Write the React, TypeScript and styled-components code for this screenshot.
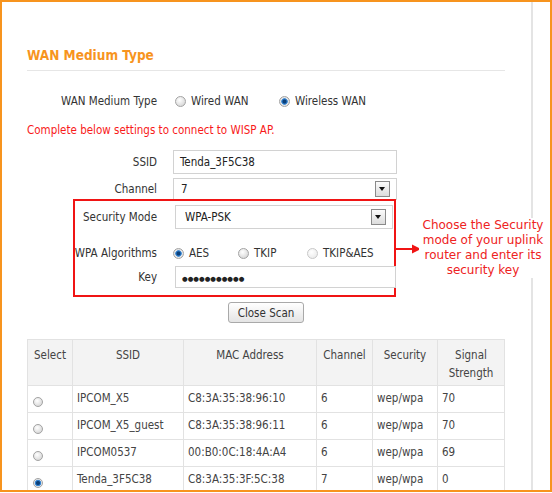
import React from 'react';
import styled, { createGlobalStyle } from 'styled-components';

const GlobalStyle = createGlobalStyle`
  html, body {
    margin: 0;
    padding: 0;
    background: #ffffff;
  }
  body {
    font-family: "DejaVu Sans Condensed", "DejaVu Sans", sans-serif;
    font-size: 11.5px;
    color: #333333;
  }
`;

const Frame = styled.div`
  width: 552px;
  height: 492px;
  box-sizing: border-box;
  border: 2px solid #f7941e;
  overflow: hidden;
`;

const Panel = styled.div`
  width: 531px;
  height: 100%;
  box-sizing: border-box;
  border-right: 2px solid #e4e4e4;
  padding: 43px 0 0 25px;
`;

const Title = styled.h2`
  margin: 0;
  width: 478px;
  font-size: 13.5px;
  font-weight: bold;
  line-height: 20px;
  color: #f7941e;
  padding-bottom: 5px;
  border-bottom: 1px solid #e6e6e6;
`;

const Row = styled.div<{ $mt: number; $h: number }>`
  display: grid;
  grid-template-columns: 130px 1fr;
  column-gap: 16px;
  align-items: center;
  width: 370px;
  height: ${(p) => p.$h}px;
  margin-top: ${(p) => p.$mt}px;
`;

const Label = styled.div`
  text-align: right;
  white-space: nowrap;
  color: #333333;
`;

const Notice = styled.div`
  margin-top: 5px;
  line-height: 24px;
  color: #f81a1a;
`;

const Field = styled.div<{ $w: number; $h: number; $ml?: number; $pl: number }>`
  position: relative;
  box-sizing: border-box;
  width: ${(p) => p.$w}px;
  height: ${(p) => p.$h}px;
  margin-left: ${(p) => p.$ml ?? 0}px;
  padding-left: ${(p) => p.$pl}px;
  line-height: ${(p) => p.$h - 2}px;
  border: 1px solid #d2d2d2;
  background: #ffffff;
  color: #222222;
  white-space: nowrap;
`;

const Dots = styled.span`
  font-family: "DejaVu Sans", sans-serif;
  font-size: 6.5px;
  color: #222222;
`;

const DropButton = styled.span`
  position: absolute;
  right: 6px;
  top: 50%;
  width: 15px;
  height: 16px;
  margin-top: -8px;
  box-sizing: border-box;
  border: 1px solid #8a8a8a;
  background: linear-gradient(#fbfbfb, #dcdcdc);
  &::after {
    content: '';
    position: absolute;
    left: 3px;
    top: 5px;
    border-left: 3.5px solid transparent;
    border-right: 3.5px solid transparent;
    border-top: 4px solid #111111;
  }
`;

const Options = styled.div<{ $ml?: number }>`
  display: flex;
  align-items: center;
  margin-left: ${(p) => p.$ml ?? 0}px;
`;

const Option = styled.label<{ $w?: number }>`
  display: inline-flex;
  align-items: center;
  gap: 5px;
  width: ${(p) => (p.$w ? `${p.$w}px` : 'auto')};
  white-space: nowrap;
  color: #333333;
`;

const Radio = styled.span<{ $checked?: boolean; $faded?: boolean; $size?: number }>`
  display: inline-block;
  flex: none;
  width: ${(p) => p.$size ?? 11}px;
  height: ${(p) => p.$size ?? 11}px;
  box-sizing: border-box;
  border-radius: 50%;
  border: 1px solid ${(p) => (p.$faded ? '#c8c8c8' : '#a3a3a3')};
  background: ${(p) =>
    p.$checked
      ? 'radial-gradient(circle, #0b3f78 0 1.5px, #2e7fd0 2.5px, #4f93d6 3px, #e9e9e9 3.6px, #cfcfcf 100%)'
      : p.$faded
      ? 'radial-gradient(circle at 40% 35%, #ffffff, #e6e6e6)'
      : 'radial-gradient(circle at 40% 35%, #ffffff, #cdcdcd)'};
`;

const Highlight = styled.div`
  position: relative;
  margin-top: 5px;
  &::before {
    content: '';
    position: absolute;
    left: 46px;
    top: -6px;
    width: 323px;
    bottom: -9px;
    box-sizing: border-box;
    border: 2px solid #f01414;
    pointer-events: none;
  }
`;

const Arrow = styled.svg`
  position: absolute;
  left: 369px;
  top: 38px;
`;

const Annotation = styled.div`
  position: absolute;
  left: 392px;
  top: 13px;
  width: 128px;
  background: #ffffff;
  font-family: "DejaVu Sans", sans-serif;
  font-size: 12px;
  line-height: 15px;
  text-align: center;
  color: #ee2222;
`;

const ButtonRow = styled.div`
  display: flex;
  justify-content: center;
  width: 478px;
  margin-top: 14px;
`;

const Button = styled.button`
  width: 76px;
  height: 21px;
  padding: 0;
  font-family: inherit;
  font-size: 11.5px;
  color: #333333;
  border: 1px solid #a9a9a9;
  border-radius: 3px;
  background: linear-gradient(#ffffff, #e4e4e4);
`;

const Table = styled.table`
  margin-top: 16px;
  width: 477px;
  border-collapse: collapse;
  table-layout: fixed;
  color: #444444;
`;

const Th = styled.th<{ $w: number }>`
  width: ${(p) => p.$w}px;
  height: 46px;
  box-sizing: border-box;
  padding: 6px 3px 0;
  vertical-align: top;
  font-weight: normal;
  line-height: 18px;
  text-align: center;
  background: #f3f3f3;
  border: 1px solid #e2e2e2;
`;

const Td = styled.td<{ $select?: boolean }>`
  height: 27px;
  box-sizing: border-box;
  padding: ${(p) => (p.$select ? '11px 0 0 5px' : '0 4px')};
  vertical-align: ${(p) => (p.$select ? 'top' : 'middle')};
  border: 1px solid #e2e2e2;
  white-space: nowrap;
  line-height: 1;
`;

const networks = [
  { ssid: 'IPCOM_X5', mac: 'C8:3A:35:38:96:10', channel: '6', security: 'wep/wpa', signal: '70' },
  { ssid: 'IPCOM_X5_guest', mac: 'C8:3A:35:38:96:11', channel: '6', security: 'wep/wpa', signal: '70' },
  { ssid: 'IPCOM0537', mac: '00:B0:0C:18:4A:A4', channel: '6', security: 'wep/wpa', signal: '69' },
  { ssid: 'Tenda_3F5C38', mac: 'C8:3A:35:3F:5C:38', channel: '7', security: 'wep/wpa', signal: '0', selected: true },
];

const App: React.FC = () => {
  return (
    <>
      <GlobalStyle />
      <Frame>
        <Panel>
          <Title>WAN Medium Type</Title>

          <Row $mt={18} $h={24}>
            <Label>WAN Medium Type</Label>
            <Options $ml={2}>
              <Option $w={104}>
                <Radio />
                Wired WAN
              </Option>
              <Option>
                <Radio $checked />
                Wireless WAN
              </Option>
            </Options>
          </Row>

          <Notice>Complete below settings to connect to WISP AP.</Notice>

          <Row $mt={8} $h={24}>
            <Label>SSID</Label>
            <Field $w={224} $h={24} $pl={6}>Tenda_3F5C38</Field>
          </Row>

          <Row $mt={4} $h={22}>
            <Label>Channel</Label>
            <Field $w={224} $h={22} $pl={7}>
              7
              <DropButton />
            </Field>
          </Row>

          <Highlight>
            <Row $mt={0} $h={24}>
              <Label>Security Mode</Label>
              <Field $w={218} $h={24} $ml={2} $pl={9}>
                WPA-PSK
                <DropButton />
              </Field>
            </Row>

            <Row $mt={12} $h={24}>
              <Label>WPA Algorithms</Label>
              <Options>
                <Option $w={65}>
                  <Radio $checked />
                  AES
                </Option>
                <Option $w={69}>
                  <Radio />
                  TKIP
                </Option>
                <Option>
                  <Radio $faded />
                  TKIP&amp;AES
                </Option>
              </Options>
            </Row>

            <Row $mt={1} $h={22}>
              <Label>Key</Label>
              <Field $w={221} $h={22} $ml={2} $pl={6}>
                <Dots>●●●●●●●●●●●</Dots>
              </Field>
            </Row>

            <Arrow width="26" height="12" viewBox="0 0 26 12">
              <line x1="0" y1="6" x2="18" y2="6" stroke="#f01414" strokeWidth="2" />
              <polygon points="16,1.5 25,6 16,10.5" fill="#f01414" />
            </Arrow>
            <Annotation>
              Choose the Security
              <br />
              mode of your uplink
              <br />
              router and enter its
              <br />
              security key
            </Annotation>
          </Highlight>

          <ButtonRow>
            <Button>Close Scan</Button>
          </ButtonRow>

          <Table>
            <thead>
              <tr>
                <Th $w={45}>Select</Th>
                <Th $w={111}>SSID</Th>
                <Th $w={133}>MAC Address</Th>
                <Th $w={56}>Channel</Th>
                <Th $w={65}>Security</Th>
                <Th $w={67}>
                  Signal
                  <br />
                  Strength
                </Th>
              </tr>
            </thead>
            <tbody>
              {networks.map((n) => (
                <tr key={n.mac}>
                  <Td $select>
                    <Radio $checked={n.selected} $size={10} />
                  </Td>
                  <Td>{n.ssid}</Td>
                  <Td>{n.mac}</Td>
                  <Td>{n.channel}</Td>
                  <Td>{n.security}</Td>
                  <Td>{n.signal}</Td>
                </tr>
              ))}
            </tbody>
          </Table>
        </Panel>
      </Frame>
    </>
  );
};

export default App;
